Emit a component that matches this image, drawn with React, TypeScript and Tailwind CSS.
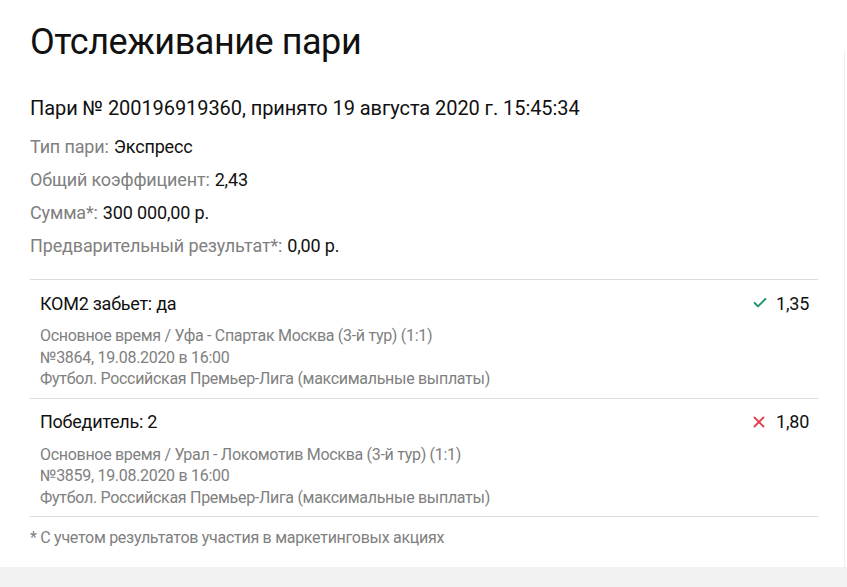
import { Check, X } from "lucide-react";

type Selection = {
  name: string;
  odds: string;
  won: boolean;
  market: string;
  event: string;
  league: string;
};

const SELECTIONS: Selection[] = [
  {
    name: "КОМ2 забьет: да",
    odds: "1,35",
    won: true,
    market: "Основное время / Уфа - Спартак Москва (3-й тур) (1:1)",
    event: "№3864, 19.08.2020 в 16:00",
    league: "Футбол. Российская Премьер-Лига (максимальные выплаты)",
  },
  {
    name: "Победитель: 2",
    odds: "1,80",
    won: false,
    market: "Основное время / Урал - Локомотив Москва (3-й тур) (1:1)",
    event: "№3859, 19.08.2020 в 16:00",
    league: "Футбол. Российская Премьер-Лига (максимальные выплаты)",
  },
];

const DETAILS: [string, string][] = [
  ["Тип пари:", "Экспресс"],
  ["Общий коэффициент:", "2,43"],
  ["Сумма*:", "300 000,00 р."],
  ["Предварительный результат*:", "0,00 р."],
];

export default function App() {
  return (
    <div className="w-[847px] h-[587px] overflow-hidden bg-white flex flex-col font-['Roboto',sans-serif]">
      <div className="flex flex-1">
        <main className="w-[818px] pl-[30px] pt-[18px]">
          <h1 className="text-[36px] leading-[48px] tracking-[-0.45px] text-[#111]">Отслеживание пари</h1>

          <p className="mt-[30px] text-[20px] leading-[24px] tracking-[-0.07px] text-[#111]">
            Пари № 200196919360, принято 19 августа 2020 г. 15:45:34
          </p>

          <div className="mt-[10px] flex flex-col">
            {DETAILS.map(([label, value]) => (
              <div key={label} className="h-[33px] flex items-center text-[18px] tracking-[-0.15px]">
                <span className="text-[#808080]">{label}</span>
                <span className="ml-[5px] text-[#111]">{value}</span>
              </div>
            ))}
          </div>

          {/* Selections of the accumulator */}
          <div className="mt-[17px] border-t border-[#dcdcdc]">
            {SELECTIONS.map((s) => (
              <div key={s.name} className="border-b border-[#dcdcdc] pl-[10px] pr-[9px] pt-[11px] pb-[8px]">
                <div className="flex items-center justify-between h-[24px] text-[18px] tracking-[-0.25px]">
                  <span className="text-[#111]">{s.name}</span>
                  <span className="flex items-center gap-[8px] text-[#111]">
                    {s.won ? (
                      <Check className="w-[16px] h-[16px] text-[#22946a]" strokeWidth={3} />
                    ) : (
                      <X className="w-[18px] h-[18px] text-[#e0404a]" strokeWidth={2.4} />
                    )}
                    {s.odds}
                  </span>
                </div>
                <div className="mt-[10px] text-[16px] leading-[21.5px] tracking-[-0.3px] text-[#808080]">
                  <div>{s.market}</div>
                  <div>{s.event}</div>
                  <div>{s.league}</div>
                </div>
              </div>
            ))}
          </div>

          <p className="mt-[10px] text-[16px] leading-[22px] tracking-[-0.28px] text-[#808080]">
            * С учетом результатов участия в маркетинговых акциях
          </p>
        </main>
        <aside className="flex-1 flex justify-end pt-[50px]">
          <div className="w-[3px] border-l border-[#f0f0f0]" />
        </aside>
      </div>
      <div className="h-[20px] bg-[#f2f2f2]" />
    </div>
  );
}
